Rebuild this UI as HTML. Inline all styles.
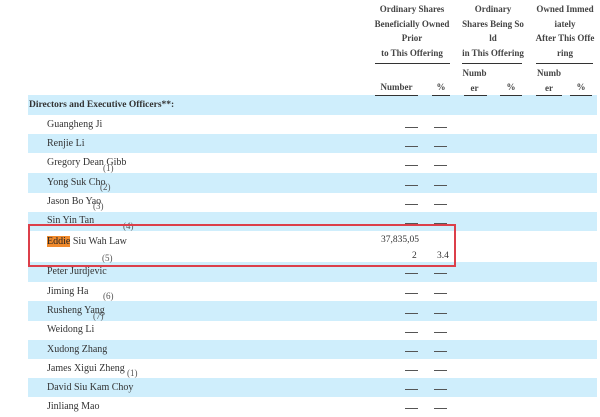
<!DOCTYPE html>
<html><head><meta charset="utf-8"><style>
body{margin:0;width:600px;height:417px;overflow:hidden;background:#fff;position:relative;font-family:"Liberation Serif",serif;color:#333;}
.r{position:absolute;left:28px;width:569px;}
.b{background:#cfeefc;}
.t{position:absolute;font-size:10px;white-space:nowrap;line-height:12px;}
.h{position:absolute;font-size:9px;font-weight:bold;text-align:center;line-height:14.5px;color:#444;white-space:nowrap;}
.u{position:absolute;height:1px;background:#333;}
.d{position:absolute;width:13px;height:1px;background:#555;}
.s{position:absolute;font-size:9px;color:#555;}
</style></head><body>
<div class="r b" style="top:95px;height:20px"></div>
<div class="r b" style="top:134px;height:19px"></div>
<div class="r b" style="top:173px;height:20px"></div>
<div class="r b" style="top:212px;height:19px"></div>
<div class="r b" style="top:262px;height:20px"></div>
<div class="r b" style="top:301px;height:20px"></div>
<div class="r b" style="top:340px;height:19px"></div>
<div class="r b" style="top:378px;height:19px"></div>

<div class="h" style="left:372px;width:80px;top:2px">Ordinary Shares<br>Beneficially Owned<br>Prior<br>to This Offering</div>
<div class="u" style="left:375px;top:63px;width:75px"></div>
<div class="h" style="left:459px;width:68px;top:2px">Ordinary<br>Shares Being So<br>ld<br>in This Offering</div>
<div class="u" style="left:462px;top:63px;width:60px"></div>
<div class="h" style="left:533px;width:64px;top:2px">Owned Immed<br>iately<br>After This Offe<br>ring</div>
<div class="u" style="left:536px;top:63px;width:57px"></div>
<div class="h" style="left:375px;width:43px;top:80px">Number</div>
<div class="h" style="left:432px;width:18px;top:80px">%</div>
<div class="h" style="left:462px;width:25px;top:66px">Numb<br>er</div>
<div class="h" style="left:500px;width:22px;top:80px">%</div>
<div class="h" style="left:536px;width:26px;top:66px">Numb<br>er</div>
<div class="h" style="left:570px;width:22px;top:80px">%</div>
<div class="u" style="left:375px;top:95px;width:43px"></div>
<div class="u" style="left:432px;top:95px;width:18px"></div>
<div class="u" style="left:464px;top:95px;width:23px"></div>
<div class="u" style="left:500px;top:95px;width:22px"></div>
<div class="u" style="left:536px;top:95px;width:26px"></div>
<div class="u" style="left:570px;top:95px;width:22px"></div>

<div class="t" style="left:29px;top:99px;font-weight:bold;font-size:9.5px">Directors and Executive Officers**:</div>
<div class="t" style="left:47px;top:119px">Guangheng Ji</div>
<div class="t" style="left:47px;top:138px">Renjie Li</div>
<div class="t" style="left:47px;top:157px">Gregory Dean Gibb</div><div class="s" style="left:103px;top:163px">(1)</div>
<div class="t" style="left:47px;top:177px">Yong Suk Cho</div><div class="s" style="left:100px;top:182px">(2)</div>
<div class="t" style="left:47px;top:196px">Jason Bo Yao</div><div class="s" style="left:93px;top:201px">(3)</div>
<div class="t" style="left:47px;top:215px">Sin Yin Tan</div><div class="s" style="left:123px;top:221px">(4)</div>
<div class="t" style="left:47px;top:236px"><span style="background:#f08a2c;color:#222">Eddie</span> Siu Wah Law</div><div class="s" style="left:102px;top:253px">(5)</div>
<div class="t" style="left:47px;top:266px">Peter Jurdjevic</div>
<div class="t" style="left:47px;top:286px">Jiming Ha</div><div class="s" style="left:103px;top:291px">(6)</div>
<div class="t" style="left:47px;top:305px">Rusheng Yang</div><div class="s" style="left:93px;top:311px">(7)</div>
<div class="t" style="left:47px;top:324px">Weidong Li</div>
<div class="t" style="left:47px;top:344px">Xudong Zhang</div>
<div class="t" style="left:47px;top:363px">James Xigui Zheng</div><div class="s" style="left:127px;top:368px">(1)</div>
<div class="t" style="left:47px;top:382px">David Siu Kam Choy</div>
<div class="t" style="left:47px;top:401px">Jinliang Mao</div>

<div class="t" style="left:381px;top:234px;font-size:9.5px">37,835,05</div>
<div class="t" style="left:412px;top:250px;font-size:9.5px">2</div>
<div class="t" style="left:437px;top:250px;font-size:9.5px">3.4</div>

<div class="d" style="left:405px;top:127px"></div><div class="d" style="left:434px;top:127px"></div>
<div class="d" style="left:405px;top:146px"></div><div class="d" style="left:434px;top:146px"></div>
<div class="d" style="left:405px;top:165px"></div><div class="d" style="left:434px;top:165px"></div>
<div class="d" style="left:405px;top:185px"></div><div class="d" style="left:434px;top:185px"></div>
<div class="d" style="left:405px;top:204px"></div><div class="d" style="left:434px;top:204px"></div>
<div class="d" style="left:405px;top:223px"></div><div class="d" style="left:434px;top:223px"></div>
<div class="d" style="left:405px;top:273px"></div><div class="d" style="left:434px;top:273px"></div>
<div class="d" style="left:405px;top:293px"></div><div class="d" style="left:434px;top:293px"></div>
<div class="d" style="left:405px;top:313px"></div><div class="d" style="left:434px;top:313px"></div>
<div class="d" style="left:405px;top:332px"></div><div class="d" style="left:434px;top:332px"></div>
<div class="d" style="left:405px;top:351px"></div><div class="d" style="left:434px;top:351px"></div>
<div class="d" style="left:405px;top:370px"></div><div class="d" style="left:434px;top:370px"></div>
<div class="d" style="left:405px;top:389px"></div><div class="d" style="left:434px;top:389px"></div>
<div class="d" style="left:405px;top:408px"></div><div class="d" style="left:434px;top:408px"></div>

<div style="position:absolute;left:28px;top:224px;width:424px;height:39px;border:2px solid #dc3f4a;"></div>
</body></html>
